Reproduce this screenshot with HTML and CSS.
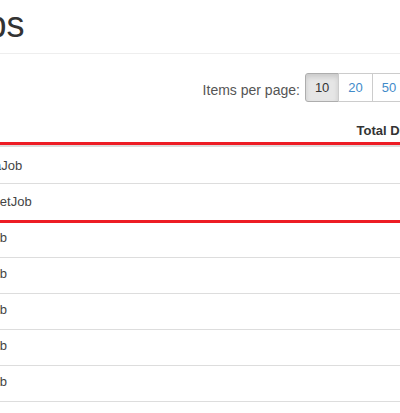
FILE: index.html
```html
<!DOCTYPE html>
<html>
<head>
<meta charset="utf-8">
<link rel="stylesheet" href="styles.css">
</head>
<body>
<div class="page">
  <div class="page-header"><h1>Jobs</h1></div>
  <div class="toolbar">
    <span class="per-page">Items per page:</span>
    <div class="btn-group">
      <button class="btn active">10</button>
      <button class="btn">20</button>
      <button class="btn">50</button>
      <button class="btn">100</button>
    </div>
  </div>
  <table class="jobs">
    <thead>
      <tr><th class="col-name">Job</th><th>Total Duration</th></tr>
    </thead>
    <tbody>
      <tr class="hl-first"><td>AgendaJob</td><td></td></tr>
      <tr class="hl-last"><td>TaxSheetJob</td><td></td></tr>
      <tr class="after-hl"><td>AuditJob</td><td></td></tr>
      <tr><td>AuditJob</td><td></td></tr>
      <tr><td>AuditJob</td><td></td></tr>
      <tr><td>AuditJob</td><td></td></tr>
      <tr><td>AuditJob</td><td></td></tr>
      <tr><td>AuditJob</td><td></td></tr>
    </tbody>
  </table>
</div>
</body>
</html>
```
FILE: styles.css
```css
html, body {
  margin: 0;
  padding: 0;
  overflow: hidden;
  background: #fff;
}
body {
  width: 400px;
  height: 413px;
  font-family: "Liberation Sans", Arial, sans-serif;
  color: #333;
}
.page {
  margin-left: -51.5px;
  width: 498.5px;
}
.page-header {
  padding: 5px 0 8px;
  border-bottom: 1px solid #eee;
  margin-bottom: 19px;
}
.page-header h1 {
  margin: 0;
  font-size: 36px;
  font-weight: 500;
  line-height: 1.1;
  color: #333;
}
.toolbar {
  display: flex;
  justify-content: flex-end;
  align-items: flex-start;
  margin-bottom: 11px;
}
.per-page {
  font-size: 14px;
  line-height: 20px;
  color: #555;
  padding-top: 7px;
  margin-right: 5px;
}
.btn-group {
  display: flex;
}
.btn {
  font-family: inherit;
  font-size: 13px;
  line-height: 17px;
  padding: 5px 9px;
  margin: 0;
  border: 1px solid #ccc;
  background: #fff;
  color: #428bca;
  border-radius: 0;
}
.btn + .btn {
  margin-left: -1px;
}
.btn:first-child {
  border-radius: 3px 0 0 3px;
}
.btn:last-child {
  border-radius: 0 3px 3px 0;
}
.btn.active {
  background: #e6e6e6;
  border-color: #adadad;
  color: #333;
  box-shadow: inset 0 3px 5px rgba(0, 0, 0, 0.125);
}
.jobs {
  width: max-content;
  border-collapse: separate;
  border-spacing: 0;
  font-size: 13px;
}
.jobs th {
  text-align: left;
  font-weight: bold;
  color: #333;
  padding: 8px 8px 5px;
  line-height: 19px;
  border-bottom: 2px solid #ddd;
  box-shadow: inset 0 -3px 0 #ed1c24;
  white-space: nowrap;
}
.jobs th.col-name {
  width: 384px;
}
.jobs td {
  padding: 6px 8px 10px;
  line-height: 19px;
  border-top: 1px solid #ddd;
  color: #444;
  white-space: nowrap;
}
.jobs tr.hl-first td {
  border-top: none;
  padding: 9px 8px 8px;
}
.jobs tr.hl-last td {
  padding: 8px 8px 9px;
  border-bottom: 3px solid #ed1c24;
}
.jobs tr.after-hl td {
  border-top: none;
  padding-top: 5px;
}
```
